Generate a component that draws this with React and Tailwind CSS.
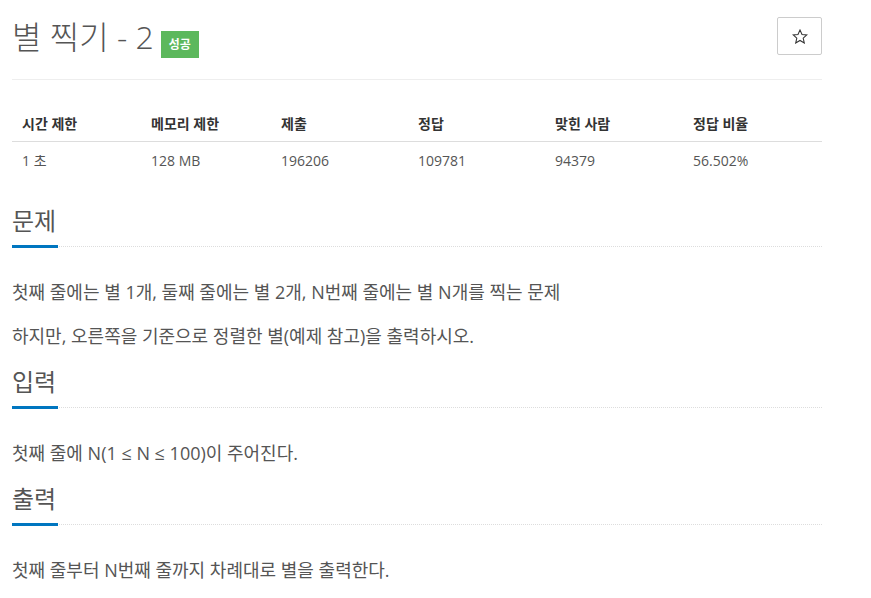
import React from 'react';

const FONT = { fontFamily: '"Open Sans", "Noto Sans CJK KR", sans-serif' };

const STATS = [
  { label: '시간 제한', value: '1 초' },
  { label: '메모리 제한', value: '128 MB' },
  { label: '제출', value: '196206' },
  { label: '정답', value: '109781' },
  { label: '맞힌 사람', value: '94379' },
  { label: '정답 비율', value: '56.502%' }
];

const SECTIONS = [
  {
    title: '문제',
    lines: [
      '첫째 줄에는 별 1개, 둘째 줄에는 별 2개, N번째 줄에는 별 N개를 찍는 문제',
      '하지만, 오른쪽을 기준으로 정렬한 별(예제 참고)을 출력하시오.'
    ]
  },
  { title: '입력', lines: ['첫째 줄에 N(1 ≤ N ≤ 100)이 주어진다.'] },
  { title: '출력', lines: ['첫째 줄부터 N번째 줄까지 차례대로 별을 출력한다.'] }
];

const StarOutline = () => (
  <svg width="16" height="15" viewBox="0 0 24 23" fill="none">
    <path
      d="M12 1.5l3.1 6.9 7.4.7-5.6 5 1.7 7.4L12 17.6l-6.6 3.9 1.7-7.4-5.6-5 7.4-.7z"
      stroke="#333"
      strokeWidth="1.6"
      strokeLinejoin="miter"
    />
  </svg>
);

const SectionHeading = ({ children }) => (
  <div className="border-b border-dotted border-[#ddd]">
    <h2 className="inline-block w-[46px] -mb-[2px] pb-[9px] border-b-[3px] border-[#0076c0] text-[24px] leading-[30px] font-normal text-[#555] whitespace-nowrap">
      {children}
    </h2>
  </div>
);

export default function App() {
  return (
    <div className="min-h-screen bg-white pl-[12px] pr-[49px]" style={FONT}>
      <div className="w-[810px]">
        <div className="flex items-start justify-between pt-[17px] pb-[21px] border-b border-[#eee]">
          <div className="flex items-start">
            <h1 className="text-[32px] leading-[40px] font-light text-[#555]">별 찍기 - 2</h1>
            <span className="ml-[7px] mt-[14px] h-[27px] px-[8px] flex items-center bg-[#5cb85c] text-white text-[12px] font-bold">
              성공
            </span>
          </div>
          <button className="w-[45px] h-[38px] flex items-center justify-center border border-[#ccc] rounded-[2px] bg-white">
            <StarOutline />
          </button>
        </div>

        <div className="mt-[25px] grid grid-cols-[129px_130px_137px_137px_138px_1fr] text-[14px]">
          {STATS.map((s) => (
            <div key={s.label} className="h-[37px] px-[10px] flex items-center border-b border-[#ddd] font-bold text-[#333] whitespace-nowrap">
              {s.label}
            </div>
          ))}
          {STATS.map((s) => (
            <div key={s.value} className="h-[37px] px-[10px] flex items-center text-[#555] whitespace-nowrap">
              {s.value}
            </div>
          ))}
        </div>

        <div className="mt-[27px]">
          {SECTIONS.map((sec) => (
            <section key={sec.title} className="mb-[3px]">
              <SectionHeading>{sec.title}</SectionHeading>
              <div className="pt-[32px]">
                {sec.lines.map((line) => (
                  <p key={line} className="text-[18px] leading-[26px] mb-[18px] text-[#555]">
                    {line}
                  </p>
                ))}
              </div>
            </section>
          ))}
        </div>
      </div>
    </div>
  );
}
